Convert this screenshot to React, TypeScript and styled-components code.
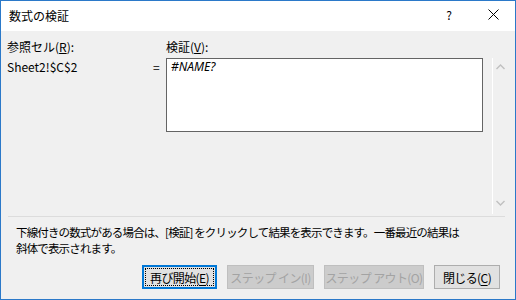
import React from "react";
import styled, { createGlobalStyle } from "styled-components";

const GlobalStyle = createGlobalStyle`
  html, body {
    margin: 0;
    padding: 0;
    background: #ffffff;
  }
  body {
    font-family: "Noto Sans CJK JP", "Noto Sans", "Liberation Sans", sans-serif;
    font-size: 12px;
    color: #000000;
  }
`;

const Window = styled.div`
  box-sizing: border-box;
  width: 516px;
  height: 300px;
  border: 1px solid #2b79c9;
  display: flex;
  flex-direction: column;
  background: #f0f0f0;
`;

const TitleBar = styled.div`
  height: 30px;
  flex-shrink: 0;
  background: #ffffff;
  display: flex;
  align-items: center;
  padding-left: 8px;
  font-size: 12px;
`;

const Title = styled.div`
  flex: 1;
  margin-top: -2px;
`;

const TitleButton = styled.div`
  width: 44px;
  height: 30px;
  display: flex;
  align-items: center;
  justify-content: center;
  font-size: 12px;
  margin-top: -3px;
`;

const Content = styled.div`
  flex: 1;
  display: flex;
  flex-direction: column;
  padding: 7px 0 10px;
`;

const TopGrid = styled.div`
  display: grid;
  grid-template-columns: 145px 14px 317px 9px 15px;
  grid-template-rows: 16px 156px;
  row-gap: 4px;
  padding-left: 6px;
  line-height: 16px;
`;

const Label = styled.div`
  white-space: nowrap;
  margin-top: 1px;
`;

const Value = styled.div`
  line-height: 16px;
  margin-top: 1px;
  white-space: nowrap;
`;

const Equals = styled.div`
  margin-top: 1px;
  padding-left: 1px;
`;

const ResultBox = styled.div`
  box-sizing: border-box;
  height: 74px;
  background: #ffffff;
  border: 1px solid #646464;
  padding: 0 4px;
  font-style: italic;
  font-family: "Noto Sans", "Liberation Sans", sans-serif;
  line-height: 16px;
`;

const ScrollTrack = styled.div`
  grid-column: 5;
  border-left: 1px solid #ffffff;
  display: flex;
  flex-direction: column;
  justify-content: space-between;
  align-items: center;
  padding: 6px 0 8px;
`;

const Separator = styled.div`
  height: 1px;
  background: #dcdcdc;
  margin: 2px 10px 0 7px;
`;

const Message = styled.p`
  margin: 7px 0 0;
  padding: 0 8px 0 15px;
  line-height: 16px;
  font-size: 11.5px;
  letter-spacing: -0.85px;
`;

const ButtonRow = styled.div`
  display: flex;
  justify-content: flex-end;
  gap: 10px;
  margin-top: auto;
  padding-right: 15px;
`;

const Button = styled.div<{ $w: number; $focus?: boolean; $disabled?: boolean }>`
  box-sizing: border-box;
  width: ${(p) => p.$w}px;
  height: 24px;
  display: flex;
  align-items: center;
  justify-content: center;
  font-size: 12px;
  letter-spacing: -0.6px;
  white-space: nowrap;
  background: ${(p) => (p.$disabled ? "#cccccc" : "#e1e1e1")};
  color: ${(p) => (p.$disabled ? "#a3a3a3" : "#000000")};
  border: ${(p) =>
    p.$focus ? "2px solid #0078d7" : p.$disabled ? "1px solid #bfbfbf" : "1px solid #adadad"};
  position: relative;

  u {
    text-decoration-thickness: 1px;
    text-underline-offset: 2px;
  }
`;

const FocusRing = styled.span`
  position: absolute;
  inset: 1px;
  border: 1px dotted #000000;
  pointer-events: none;
`;

const Chevron = ({ up }: { up?: boolean }) => (
  <svg width="9" height="6" viewBox="0 0 9 6">
    <path
      d={up ? "M0.5 5 L4.5 1 L8.5 5" : "M0.5 1 L4.5 5 L8.5 1"}
      fill="none"
      stroke="#c0c0c0"
      strokeWidth="1.4"
    />
  </svg>
);

export default function App() {
  return (
    <>
      <GlobalStyle />
      <Window>
        <TitleBar>
          <Title>数式の検証</Title>
          <TitleButton>?</TitleButton>
          <TitleButton>
            <svg width="11" height="11" viewBox="0 0 11 11">
              <path d="M0.5 0.5 L10.5 10.5 M10.5 0.5 L0.5 10.5" stroke="#000" strokeWidth="1" />
            </svg>
          </TitleButton>
        </TitleBar>
        <Content>
          <TopGrid>
            <Label>
              参照セル(<u>R</u>):
            </Label>
            <div />
            <Label>
              検証(<u>V</u>):
            </Label>
            <div />
            <div />
            <Value>Sheet2!$C$2</Value>
            <Equals>=</Equals>
            <ResultBox>#NAME?</ResultBox>
            <div />
            <ScrollTrack>
              <Chevron up />
              <Chevron />
            </ScrollTrack>
          </TopGrid>
          <Separator />
          <Message>
            下線付きの数式がある場合は、[検証] をクリックして結果を表示できます。一番最近の結果は
            <br />
            斜体で表示されます。
          </Message>
          <ButtonRow>
            <Button $w={75} $focus>
              <FocusRing />
              再び開始(<u>E</u>)
            </Button>
            <Button $w={87} $disabled>
              ステップ イン(I)
            </Button>
            <Button $w={100} $disabled>
              ステップ アウト(O)
            </Button>
            <Button $w={66}>
              閉じる(<u>C</u>)
            </Button>
          </ButtonRow>
        </Content>
      </Window>
    </>
  );
}
